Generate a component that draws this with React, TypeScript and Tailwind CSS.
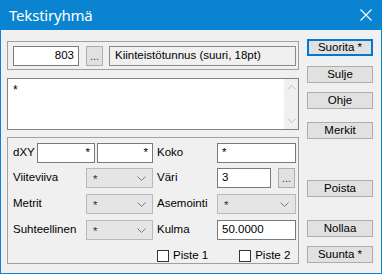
import React from 'react'

const font = { fontFamily: '"Liberation Sans", Arial, sans-serif' }

function TextBox({ value, className = '', right = false }: { value: string; className?: string; right?: boolean }) {
  return (
    <div
      className={`h-[20px] bg-white border border-[#7a7a7a] flex items-center px-[4px] text-[11.5px] text-black ${right ? 'justify-end' : ''} ${className}`}
    >
      {value}
    </div>
  )
}

function Combo({ value, className = '' }: { value: string; className?: string }) {
  return (
    <div className={`h-[20px] bg-[#e5e5e5] border border-[#b9b9b9] flex items-start justify-between pl-[6px] pr-[6px] pt-[2px] text-[11.5px] text-[#333] ${className}`}>
      <span>{value}</span>
      <svg width="9" height="6" viewBox="0 0 9 6" className="mt-[5px]">
        <path d="M0.5 0.5 L4.5 4.5 L8.5 0.5" fill="none" stroke="#7a7a7a" strokeWidth="1" />
      </svg>
    </div>
  )
}

function Dots({ className = '' }: { className?: string }) {
  return (
    <div className={`h-[20px] w-[17px] bg-[#e1e1e1] border border-[#adadad] flex items-end justify-center pb-[3px] text-[11px] leading-none text-[#333] ${className}`}>
      ...
    </div>
  )
}

function Btn({ label, primary = false, className = '' }: { label: string; primary?: boolean; className?: string }) {
  return (
    <button
      className={`w-[66px] h-[17px] bg-[#e1e1e1] border flex items-center justify-center text-[11.5px] text-black ${primary ? 'border-[#0078d7] border-2' : 'border-[#adadad]'} ${className}`}
    >
      {label}
    </button>
  )
}

function Check({ label }: { label: string }) {
  return (
    <div className="flex items-center gap-[4px] text-[11.5px] text-black">
      <div className="w-[12px] h-[12px] bg-white border border-[#333]" />
      <span>{label}</span>
    </div>
  )
}

export default function App() {
  return (
    <div className="w-[382px] h-[274px] bg-[#0a84d0] flex flex-col" style={font}>
      {/* Title bar */}
      <div className="h-[30px] flex items-center justify-between pl-[9px] pr-[10px] text-white">
        <span className="text-[15px] tracking-[-0.2px]" style={{ fontFamily: '"Noto Sans", "Open Sans", sans-serif' }}>
          Tekstiryhmä
        </span>
        <svg width="12" height="12" viewBox="0 0 12 12">
          <path d="M0.5 0.5 L11.5 11.5 M11.5 0.5 L0.5 11.5" stroke="white" strokeWidth="1.1" />
        </svg>
      </div>

      {/* Body */}
      <div className="flex-1 mx-[1px] mb-[1px] bg-[#f0f0f0] flex pl-[6px]">
        {/* Left column */}
        <div className="w-[292px] flex flex-col pt-[11px]">
          <div className="h-[29px] border border-[#a0a0a0] flex items-center pl-[5px] pr-[2px]">
            <TextBox value="803" right className="w-[66px]" />
            <Dots className="ml-[7px]" />
            <div className="ml-[6px] h-[20px] w-[187px] border border-[#8a8a8a] bg-[#f0f0f0] flex items-center pl-[5px] text-[11.5px] text-black">
              Kiinteistötunnus (suuri, 18pt)
            </div>
          </div>

          <div className="mt-[8px] h-[52px] bg-white border border-[#828282] flex justify-between">
            <span className="pl-[5px] pt-[2px] text-[12px] text-black">*</span>
            <div className="w-[14px] bg-[#f0f0f0] flex flex-col items-center justify-between py-[5px]">
              <svg width="9" height="6" viewBox="0 0 9 6">
                <path d="M0.5 5.5 L4.5 1.5 L8.5 5.5" fill="none" stroke="#c2c2c2" strokeWidth="1" />
              </svg>
              <svg width="9" height="6" viewBox="0 0 9 6">
                <path d="M0.5 0.5 L4.5 4.5 L8.5 0.5" fill="none" stroke="#c2c2c2" strokeWidth="1" />
              </svg>
            </div>
          </div>

          <div className="mt-[7px] h-[127px] border border-[#a0a0a0] flex flex-col pt-[5px] pl-[5px]">
            <div className="flex h-[20px] items-center">
              <div className="w-[140px] flex items-center">
                <span className="w-[24px] text-[11.5px] text-black">dXY</span>
                <TextBox value="*" right className="w-[58px]" />
                <TextBox value="*" right className="w-[56px] ml-[2px]" />
              </div>
              <span className="ml-[4px] w-[60px] text-[11.5px] text-black">Koko</span>
              <TextBox value="*" className="w-[79px]" />
            </div>

            <div className="flex h-[20px] items-center mt-[5px]">
              <div className="w-[140px] flex items-center">
                <span className="w-[73px] text-[11.5px] text-black">Viiteviiva</span>
                <Combo value="*" className="w-[67px]" />
              </div>
              <span className="ml-[4px] w-[60px] text-[11.5px] text-black">Väri</span>
              <TextBox value="3" className="w-[54px]" />
              <Dots className="ml-[7px]" />
            </div>

            <div className="flex h-[20px] items-center mt-[6px]">
              <div className="w-[140px] flex items-center">
                <span className="w-[73px] text-[11.5px] text-black">Metrit</span>
                <Combo value="*" className="w-[67px]" />
              </div>
              <span className="ml-[4px] w-[60px] text-[11.5px] text-black">Asemointi</span>
              <Combo value="*" className="w-[79px]" />
            </div>

            <div className="flex h-[20px] items-center mt-[6px]">
              <div className="w-[140px] flex items-center">
                <span className="w-[73px] text-[11.5px] text-black">Suhteellinen</span>
                <Combo value="*" className="w-[67px]" />
              </div>
              <span className="ml-[4px] w-[60px] text-[11.5px] text-black">Kulma</span>
              <TextBox value="50.0000" className="w-[79px]" />
            </div>

            <div className="flex mt-[7px] pl-[144px] gap-[31px]">
              <Check label="Piste 1" />
              <Check label="Piste 2" />
            </div>
          </div>
        </div>

        {/* Right column buttons */}
        <div className="ml-[8px] flex flex-col pt-[9px]">
          <Btn label="Suorita *" primary />
          <Btn label="Sulje" className="mt-[10px]" />
          <Btn label="Ohje" className="mt-[9px]" />
          <Btn label="Merkit" className="mt-[13px]" />
          <Btn label="Poista" className="mt-[41px]" />
          <Btn label="Nollaa" className="mt-[23px]" />
          <Btn label="Suunta *" className="mt-[9px]" />
        </div>
      </div>
    </div>
  )
}
